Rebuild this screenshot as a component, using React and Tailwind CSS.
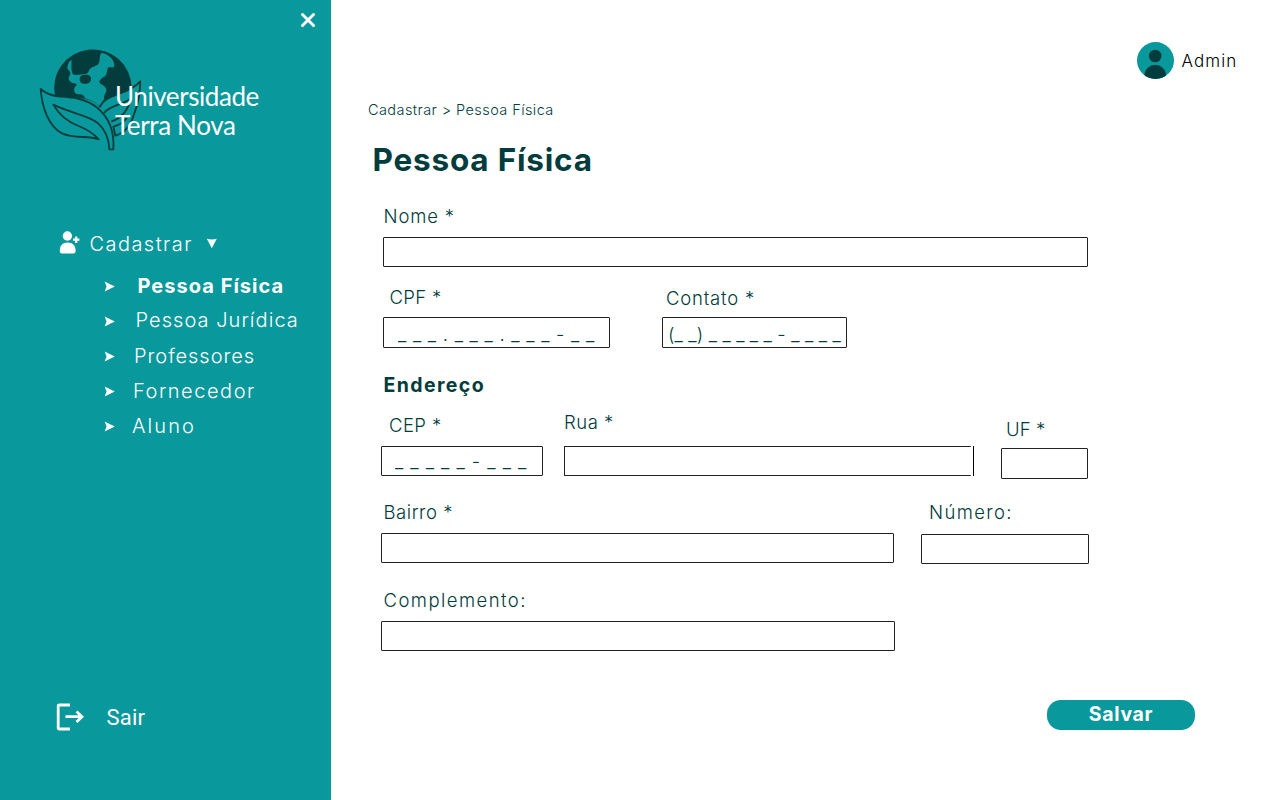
import React from 'react';

const links = [
  { label: 'Pessoa Física', className: 'ml-[22.5px] pt-0.5 font-bold tracking-[1.03px]' },
  { label: 'Pessoa Jurídica', className: 'ml-[20.5px] font-light tracking-[1.05px]' },
  { label: 'Professores', className: 'ml-[19px] pt-0.5 font-light tracking-[0.96px]' },
  { label: 'Fornecedor', className: 'ml-[18px] pt-0.5 font-light tracking-[1.53px]' },
  { label: 'Aluno', className: 'ml-[17px] pt-0.5 font-light tracking-[2.1px]' },
];

function Logo() {
  return (
    <div className="relative ml-9 h-[110px] w-[230px]">
      <svg className="h-[110px] w-[110px]" viewBox="0 0 330 330" fill="none" stroke="#033c3d" strokeWidth="5.5" strokeLinejoin="round">
        <path
          d="M57 157A116.300 116.300 0 1 1 287 131C270 142 245 150 222 158C208 165 197 174 190 187C175 172 160 167 145 164C115 158 85 160 57 157Z"
          fill="#033c3d"
          stroke="none"
        />
        <path
          d="M94 70C95 60 100 51 106 47C108 60 104 78 110 89C116 96 130 92 140 91C152 92 157 86 160 77C165 68 180 68 187 60C194 50 188 38 196 27C203 27 211 30 217 35C230 42 236 58 235 67C231 74 223 67 216 71C211 80 215 87 207 97C200 101 190 107 190 115C192 122 208 124 211 136C213 146 203 150 204 165L190 187C175 172 160 167 146 163C147 156 138 150 128 151C116 151 112 142 116 130C122 124 126 121 116 118C104 117 97 108 98 101C101 94 106 90 101 82C97 77 93 76 94 70Z"
          fill="#09989b"
          stroke="none"
        />
        <path d="M131 103C133 94 141 92 150 92C161 92 166 98 165 106C164 116 158 120 148 119C137 121 130 115 131 103Z" fill="#033c3d" stroke="none" />
        <path
          d="M14 135C30 149 48 156 72 158C112 160 150 164 182 190C218 219 236 258 232 316H220C219 286 209 258 184 236C155 213 105 208 52 182C70 214 95 234 128 246C155 257 174 270 188 286C155 274 115 285 78 268C38 246 18 192 14 135Z"
          fill="#09989b"
        />
        <path
          d="M190 190C203 164 228 158 250 149C278 139 300 126 313 112C312 145 306 180 296 205C286 240 266 268 238 275L232 248C248 244 262 236 272 222L226 232L204 207Z"
          fill="#09989b"
          stroke="none"
        />
        <path d="M190 190C203 164 228 158 250 149C278 139 300 126 313 112C312 145 306 180 296 205C286 240 266 268 238 275L232 248C248 244 262 236 272 222" />
        <path d="M204 207C218 186 254 184 284 164C275 202 252 224 226 232" />
      </svg>
      <div className="absolute left-[79px] top-[37.5px] whitespace-nowrap font-['Lato',sans-serif] text-[26px] leading-[29px] text-white">
        <p className="tracking-[-0.42px]">Universidade</p>
        <p className="tracking-[-0.35px]">Terra Nova</p>
      </div>
    </div>
  );
}

function Sidebar() {
  return (
    <aside className="flex h-full w-[331px] shrink-0 flex-col bg-[#09989b] text-white">
      <div className="flex h-11 justify-end pr-[15px] pt-3">
        <svg className="h-4 w-4" viewBox="0 0 16 16" stroke="white" strokeWidth="3" strokeLinecap="round">
          <path d="M2.500 2.500L13.500 13.500M13.500 2.500L2.500 13.500" />
        </svg>
      </div>
      <Logo />
      <nav className="mt-[72px] whitespace-nowrap text-[20px]">
        <div className="flex h-9 items-center pl-[59px] leading-9">
          <svg className="mb-[3px] h-[23px] w-[22px]" viewBox="0 0 22 23" fill="white">
            <circle cx="8.4" cy="5" r="4.7" />
            <path d="M.8 19.5C.8 14.5 3.5 11.4 8.6 11.4S16.6 14.5 16.6 19.5C16.6 21.5 16 22.4 14.5 22.4H3C1.4 22.4 .8 21.5 .8 19.5Z" />
            <path d="M17.2 5.500V11.900M14 8.700H20.400" stroke="white" strokeWidth="2.200" />
          </svg>
          <span className="ml-[8.500px] font-light tracking-[1.450px]">Cadastrar</span>
          <svg className="mb-0.5 ml-[13px] h-[11px] w-[12px]" viewBox="0 0 12 11" fill="white">
            <path d="M.8 .8Q5.800 2.200 10.800 .8L5.800 10.200Z" />
          </svg>
        </div>
        <ul className="mt-1.5">
          {links.map((link) => (
            <li key={link.label} className="flex h-[35px] items-center pl-[104px] leading-[35px]">
              <svg className="mt-0.5 h-[11px] w-[11px]" viewBox="0 0 11 11" fill="white">
                <path d="M.6 .4L10.800 5.500L.6 10.600L2.600 5.500Z" />
              </svg>
              <span className={link.className}>{link.label}</span>
            </li>
          ))}
        </ul>
      </nav>
      <div className="mb-[66px] mt-auto flex h-[34px] items-center pl-14">
        <svg className="h-7 w-7" viewBox="0 0 28 28" fill="none" stroke="white" strokeWidth="2.800">
          <path d="M14 2H3.500Q2.200 2 2.200 3.300V24.700Q2.200 26 3.500 26H14" />
          <path d="M9.500 13.700H26M20.500 8.500L26 13.700L20.500 18.900" />
        </svg>
        <span className="ml-[22.500px] pt-0.5 font-['Roboto',sans-serif] text-[22px] leading-[34px] tracking-[0.200px]">Sair</span>
      </div>
    </aside>
  );
}

function Label({ className, children }) {
  return <label className={`block h-6 whitespace-nowrap text-[18.5px] font-light leading-6 ${className}`}>{children}</label>;
}

function Field({ className, ...props }) {
  return (
    <input
      type="text"
      className={`block rounded-[1px] border border-[#222] bg-white outline-none placeholder:text-[#033c3d] placeholder:opacity-100 ${className}`}
      {...props}
    />
  );
}

export default function App() {
  return (
    <div className="flex h-[800px] w-[1280px] overflow-hidden bg-white font-['Inter',sans-serif] text-[#033c3d]">
      <Sidebar />
      <main className="flex min-w-0 flex-1 flex-col">
        <header className="flex h-[100px] items-start justify-end pr-[42px] pt-[42px]">
          <svg className="h-[37px] w-[37px]" viewBox="0 0 37 37">
            <clipPath id="avatar">
              <circle cx="18.5" cy="18.5" r="18.5" />
            </clipPath>
            <g clipPath="url(#avatar)">
              <rect width="37" height="37" fill="#09989b" />
              <circle cx="18.2" cy="14" r="6.3" fill="#033c3d" />
              <ellipse cx="18.2" cy="33.300" rx="10.800" ry="10.500" fill="#033c3d" />
            </g>
          </svg>
          <span className="ml-[7.500px] w-[56.500px] whitespace-nowrap text-[17px] font-light leading-[38px] tracking-[1.100px] text-black">Admin</span>
        </header>

        <p className="ml-[37px] h-5 whitespace-nowrap text-[14.500px] font-light leading-5 tracking-[0.420px]">Cadastrar &gt; Pessoa Física</p>
        <h1 className="ml-[41.500px] mt-5 h-10 whitespace-nowrap text-[31.500px] font-bold leading-10 tracking-[0.800px]">Pessoa Física</h1>

        <form className="flex flex-col pl-[50px]">
          <div className="pt-6">
            <Label className="ml-[2.500px] tracking-[0.840px]">Nome *</Label>
            <Field className="ml-0.5 mt-[9px] h-[30px] w-[705px]" />
          </div>

          <div className="flex pt-[18px]">
            <div className="w-[281px]">
              <Label className="ml-[8.500px] tracking-[0.330px]">CPF *</Label>
              <Field
                className="ml-0.5 mt-2 h-[31px] w-[227px] pl-[14px] pt-[2px] text-[18.5px] font-light tracking-[0.720px]"
                placeholder="_ _ _ . _ _ _ . _ _ _ - _ _"
              />
            </div>
            <div>
              <Label className="ml-1 mt-px tracking-[0.790px]">Contato *</Label>
              <Field
                className="mt-[7px] h-[31px] w-[185px] pl-[5px] pt-[2px] text-[18.5px] font-light tracking-[0.130px]"
                placeholder="(_ _) _ _ _ _ _ - _ _ _ _"
              />
            </div>
          </div>

          <h2 className="ml-[2.500px] mt-[25px] h-6 whitespace-nowrap text-[19.500px] font-bold leading-6 tracking-[1.400px]">Endereço</h2>

          <div className="flex h-[82px]">
            <div className="w-[183px] pt-4">
              <Label className="ml-2 tracking-[0.430px]">CEP *</Label>
              <Field
                className="mt-[9px] h-[30px] w-[162px] pl-[13px] text-[18.5px] font-light tracking-[0.940px]"
                placeholder="_ _ _ _ _ - _ _ _"
              />
            </div>
            <div className="w-[437px] pt-[13px]">
              <Label className="tracking-[0.500px]">Rua *</Label>
              <div className="mt-3 flex gap-0.5">
                <Field className="h-[30px] w-[407px] border-r-0" />
                <div className="h-[30px] w-px bg-black" />
              </div>
            </div>
            <div className="pt-5">
              <Label className="ml-[5px] tracking-[0.100px]">UF *</Label>
              <Field className="mt-[7px] h-[31px] w-[87px]" />
            </div>
          </div>

          <div className="flex pt-[21px]">
            <div className="w-[540px]">
              <Label className="ml-[2.500px] tracking-[0.550px]">Bairro *</Label>
              <Field className="mt-[9px] h-[30px] w-[513px]" />
            </div>
            <div>
              <Label className="ml-2 tracking-[1.350px]">Número:</Label>
              <Field className="mt-[10px] h-[30px] w-[168px]" />
            </div>
          </div>

          <div className="pt-6">
            <Label className="ml-[2.500px] tracking-[1.450px]">Complemento:</Label>
            <Field className="mt-[9px] h-[30px] w-[514px]" />
          </div>

          <button
            type="button"
            className="ml-[666px] mt-[49px] flex h-[30px] w-[148px] items-start justify-center rounded-[14px] bg-[#09989b] text-[19.500px] font-bold leading-[29px] tracking-[0.700px] text-white"
          >
            Salvar
          </button>
        </form>
      </main>
    </div>
  );
}
